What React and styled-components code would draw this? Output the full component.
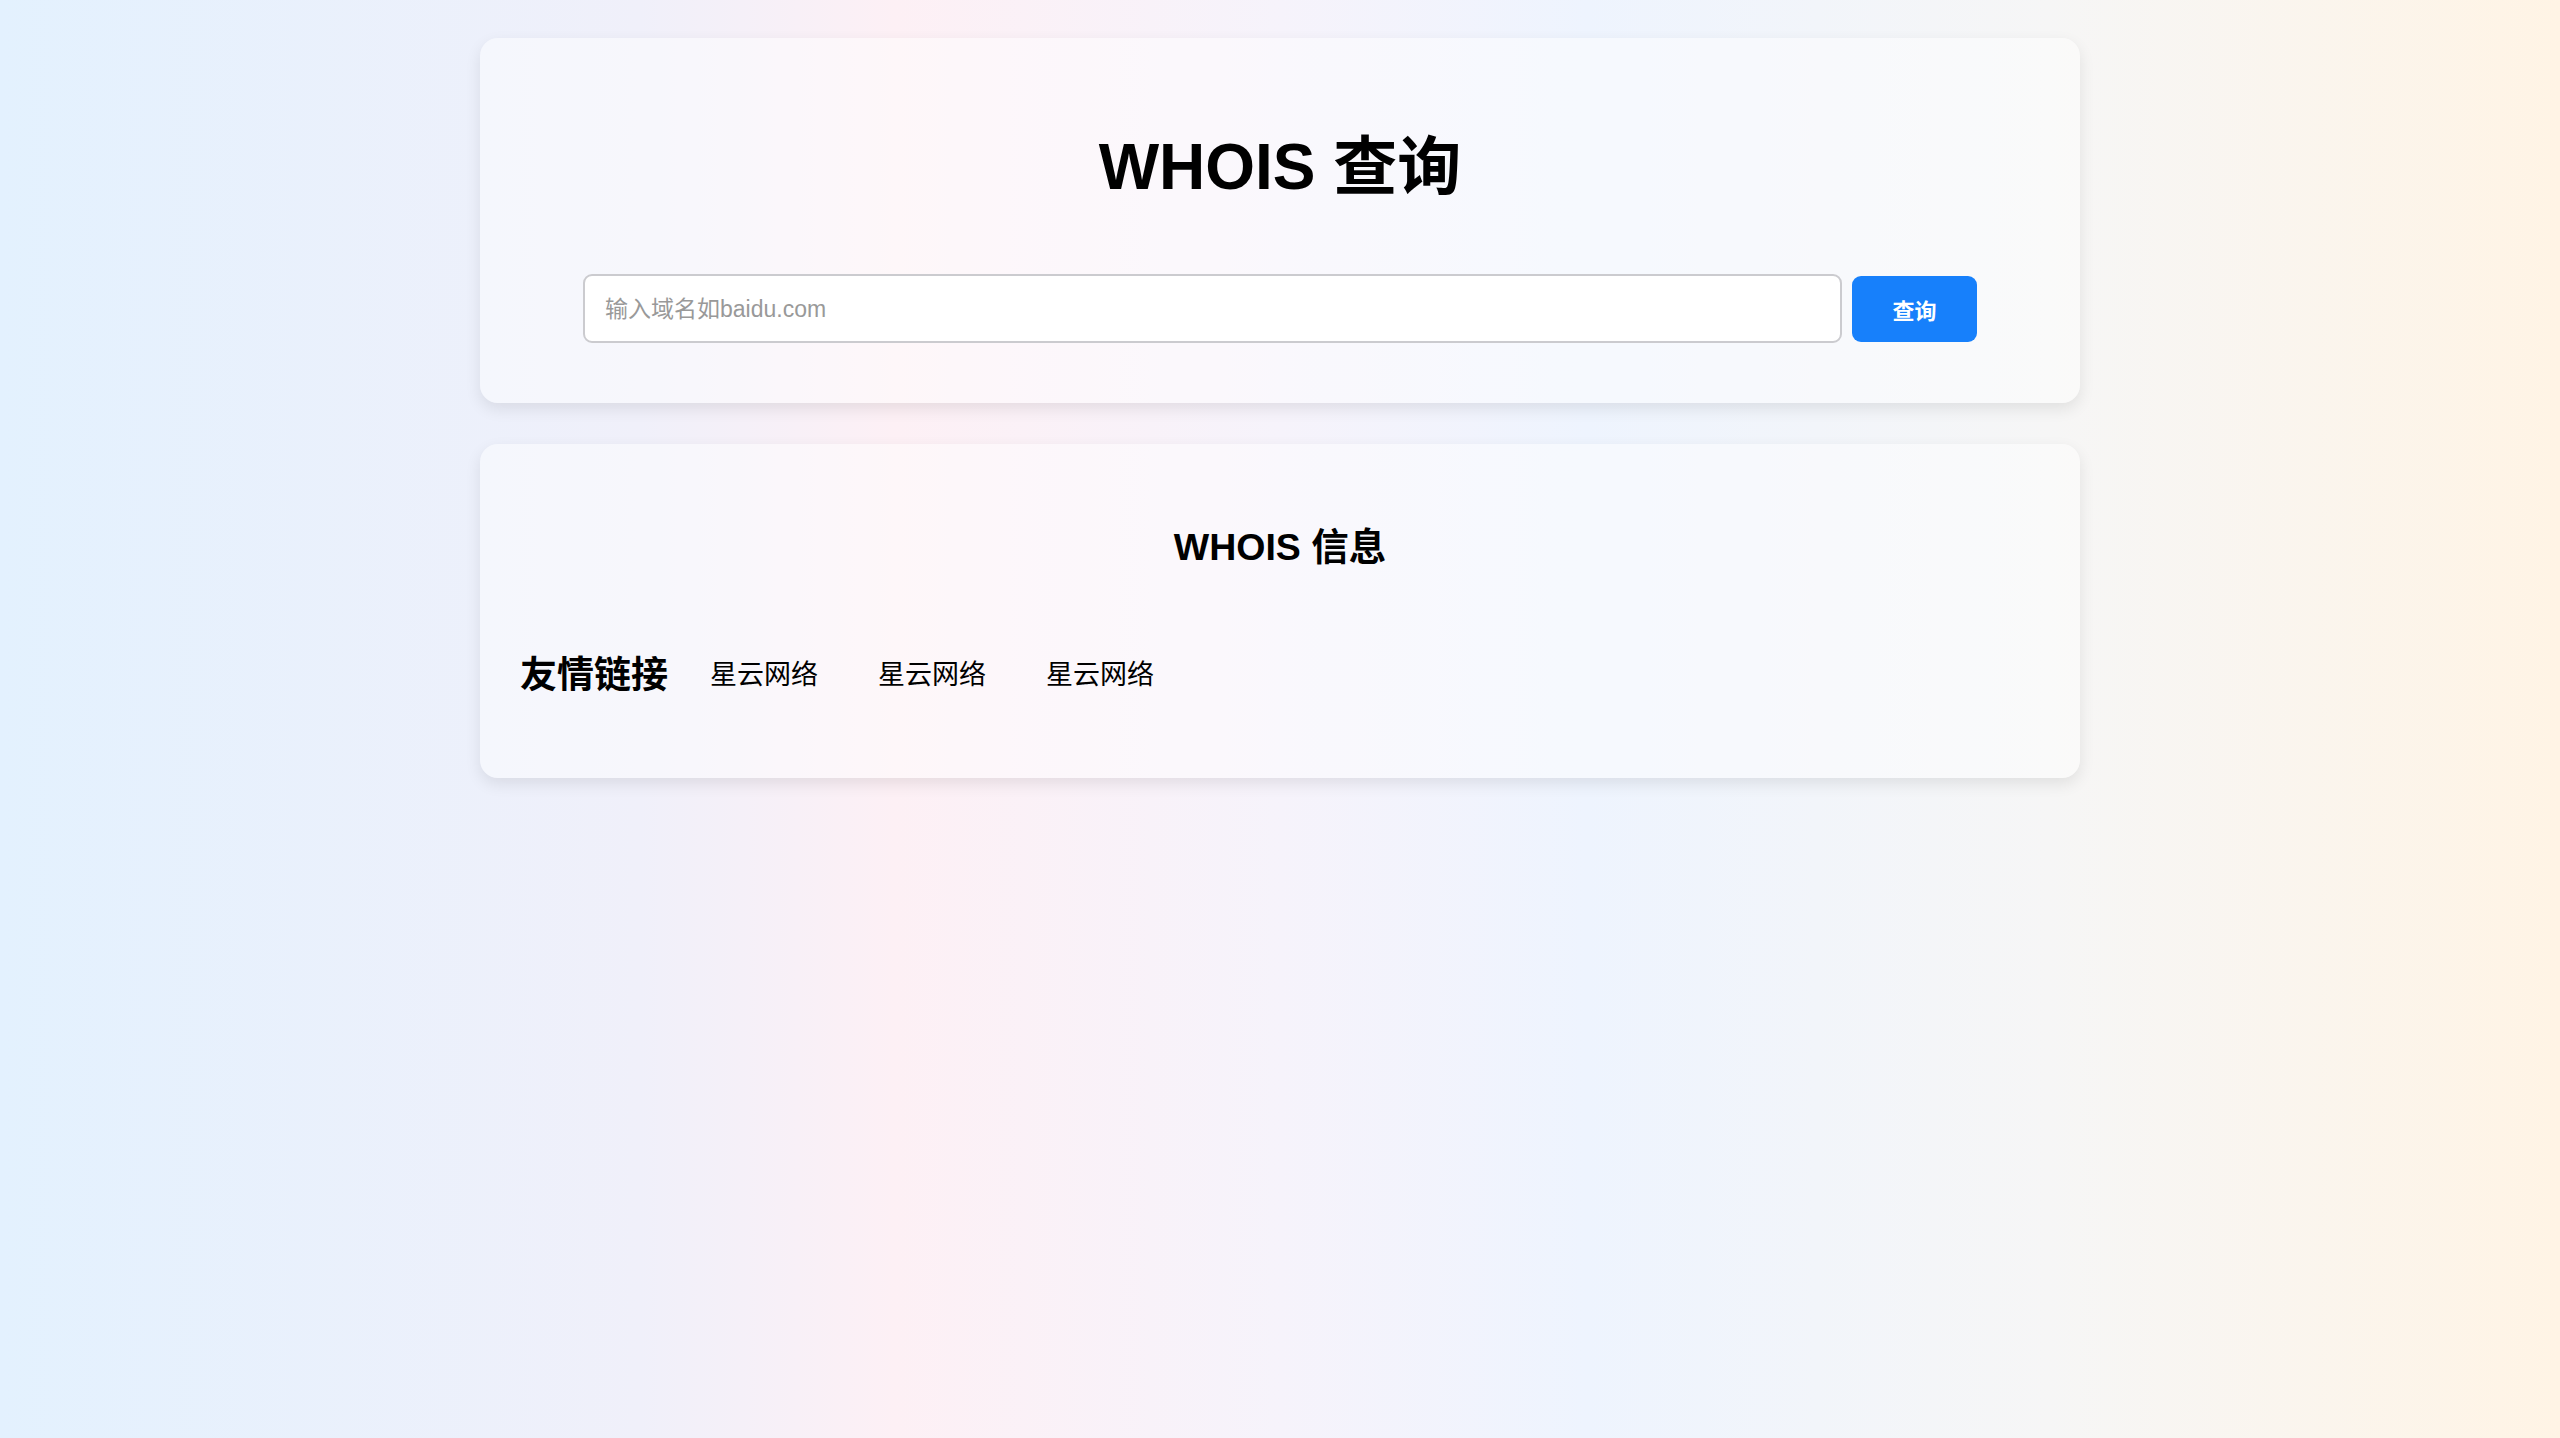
import React from "react";
import styled, { createGlobalStyle } from "styled-components";

const GlobalStyle = createGlobalStyle`
  html, body { margin: 0; padding: 0; }
  body {
    min-height: 1438px;
    font-family: "Liberation Sans", Arial, "Noto Sans CJK SC", sans-serif;
    color: #000;
    background: linear-gradient(to right, #e3f1fe 0%, #f0f0fa 25%, #fdf0f5 35%, #f6f3fb 50%, #eef4fe 62%, #f6f6f6 80%, #fff4e5 100%);
    background-attachment: fixed;
  }
`;

const Page = styled.div`
  display: flex;
  flex-direction: column;
  align-items: center;
  gap: 41px;
  padding-top: 38px;
`;

const Card = styled.section`
  width: 1600px;
  box-sizing: border-box;
  background: rgba(255, 255, 255, 0.45);
  border-radius: 18px;
  box-shadow: 0 6px 16px rgba(0, 0, 0, 0.09);
  padding: ${(p) => p.$pad};
`;

const Title = styled.h1`
  margin: 0 0 68px;
  text-align: center;
  font-size: 64px;
  line-height: 77px;
  font-weight: 700;
`;

const SearchForm = styled.form`
  display: flex;
  align-items: center;
  gap: 10px;
`;

const SearchInput = styled.input`
  flex: 1;
  height: 69px;
  box-sizing: border-box;
  border: 2px solid #cbcbcf;
  border-radius: 9px;
  background: #fff;
  padding: 2px 20px 0;
  font-size: 23px;
  font-family: "Liberation Sans", Arial, "Noto Sans CJK SC", sans-serif;
  outline: none;
  &::placeholder { color: #999; }
`;

const SearchButton = styled.button`
  width: 125px;
  height: 66px;
  border: none;
  border-radius: 9px;
  background: #1780fb;
  color: #fff;
  font-size: 22px;
  font-weight: 700;
  font-family: "Liberation Sans", Arial, "Noto Sans CJK SC", sans-serif;
  cursor: pointer;
`;

const SubTitle = styled.h3`
  margin: 0 0 77px;
  text-align: center;
  font-size: 37.5px;
  line-height: 45px;
  font-weight: 700;
`;

const FriendRow = styled.div`
  display: flex;
  align-items: center;
  height: 50px;
`;

const FriendHeading = styled.span`
  font-size: 37px;
  font-weight: 700;
  margin-right: 42px;
`;

const FriendLink = styled.a`
  font-size: 27px;
  color: #000;
  text-decoration: none;
  margin-right: 60px;
`;

export default function App() {
  const links = ["星云网络", "星云网络", "星云网络"];
  return (
    <>
      <GlobalStyle />
      <Page>
        <Card $pad="91px 103px 60px">
          <Title>WHOIS 查询</Title>
          <SearchForm onSubmit={(e) => e.preventDefault()}>
            <SearchInput placeholder="输入域名如baidu.com" />
            <SearchButton type="submit">查询</SearchButton>
          </SearchForm>
        </Card>
        <Card $pad="81px 40px 81px">
          <SubTitle>WHOIS 信息</SubTitle>
          <FriendRow>
            <FriendHeading>友情链接</FriendHeading>
            {links.map((l, i) => (
              <FriendLink key={i} href="#">{l}</FriendLink>
            ))}
          </FriendRow>
        </Card>
      </Page>
    </>
  );
}
